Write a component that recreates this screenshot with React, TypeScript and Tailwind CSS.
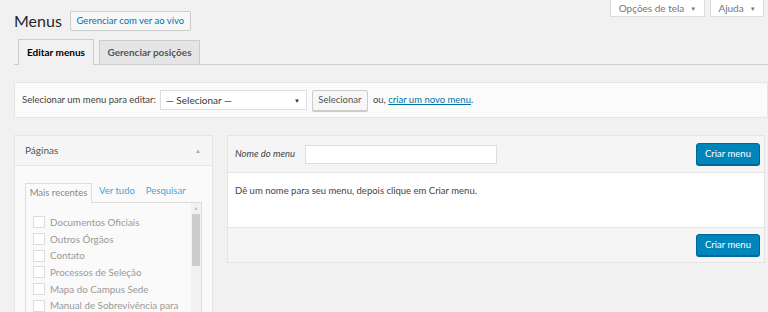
import React from "react";

const pages = [
  "Documentos Oficiais",
  "Outros Órgãos",
  "Contato",
  "Processos de Seleção",
  "Mapa do Campus Sede",
  "Manual de Sobrevivência para",
];

export default function App() {
  return (
    <div
      className="relative h-[312px] w-[768px] overflow-hidden whitespace-nowrap bg-[#f1f1f1] text-[9.5px] text-[#444]"
      style={{ fontFamily: 'Lato, "Noto Sans", sans-serif' }}
    >
      {/* screen meta links */}
      <div className="absolute right-[4px] top-0 flex gap-[5px]">
        <ScreenLink label="Opções de tela" w="w-[95px]" />
        <ScreenLink label="Ajuda" w="w-[54px]" />
      </div>

      <div className="pl-[14px]">
        <div className="mt-[10px] flex h-[22px] items-center">
          <h1 className="text-[16px] leading-[22px] font-normal text-[#23282d]">Menus</h1>
          <button className="ml-[8px] h-[20px] w-[121px] rounded-[2px] border border-[#ccc] bg-[#f7f7f7] text-[9.5px] leading-[18px] text-[#0073aa]">
            Gerenciar com ver ao vivo
          </button>
        </div>

        {/* tabs */}
        <div className="mt-[7px] flex h-[26px] items-end border-b border-[#ccc] pl-[4px]">
          <div className="-mb-px flex h-[26px] w-[76px] items-center justify-center border border-b-0 border-[#ccc] bg-[#f1f1f1] text-[10px] font-bold text-[#000]">
            Editar menus
          </div>
          <div className="-mb-px ml-[5px] flex h-[25px] w-[101px] items-center justify-center border border-[#ccc] bg-[#e5e5e5] text-[10px] font-bold text-[#555]">
            Gerenciar posições
          </div>
        </div>

        {/* select bar */}
        <div className="mt-[17px] flex h-[36px] items-center border border-[#e5e5e5] bg-[#fbfbfb] pl-[7px] text-[9.5px] text-[#444]">
          <span>Selecionar um menu para editar:</span>
          <div className="ml-[4px] flex h-[20px] w-[147px] items-center justify-between border border-[#ddd] bg-white pl-[5px] pr-[6px] text-[10px] text-[#32373c]">
            <span>— Selecionar —</span>
            <span className="text-[6px] text-[#333]">▼</span>
          </div>
          <button className="ml-[5px] h-[21px] w-[56px] rounded-[2px] border border-[#ccc] bg-[#f7f7f7] text-[9.5px] text-[#555] shadow-[0_1px_0_#ccc]">
            Selecionar
          </button>
          <span className="ml-[5px]">
            ou, <span className="text-[#0073aa] underline">criar um novo menu</span>.
          </span>
        </div>

        <div className="mt-[17px] flex gap-[14px]">
          {/* left panel */}
          <div className="h-[200px] w-[199px] shrink-0 border border-[#e5e5e5] bg-white">
            <div className="flex h-[30px] items-center justify-between border-b border-[#e5e5e5] bg-[#f5f5f5] pl-[10px] pr-[11px] text-[10px] text-[#555]">
              <span>Páginas</span>
              <span className="text-[6px] text-[#aaa]">▲</span>
            </div>
            <div className="bg-[#fafafa] px-[10px] pt-[17px]">
              <div className="flex h-[19px] items-end text-[9.5px]">
                <div className="-mb-px flex h-[20px] w-[67px] items-center justify-center border border-b-0 border-[#ddd] bg-[#fafafa] text-[#888]">
                  Mais recentes
                </div>
                <span className="mb-[4px] ml-[7px] text-[#46a5d6]">Ver tudo</span>
                <span className="mb-[4px] ml-[11px] text-[#46a5d6]">Pesquisar</span>
              </div>
              <div className="flex h-[120px] border border-[#ddd] bg-[#fafafa]">
                <div className="flex-1 pl-[7px] pt-[11px]">
                  {pages.map((p) => (
                    <div key={p} className="flex h-[16.7px] items-center text-[9.8px] text-[#999]">
                      <span className="mr-[5px] h-[12px] w-[12px] shrink-0 border border-[#ddd] bg-white" />
                      {p}
                    </div>
                  ))}
                </div>
                <div className="flex w-[10px] flex-col items-center bg-[#f1f1f1]">
                  <span className="text-[5px] leading-[11px] text-[#bbb]">▲</span>
                  <div className="h-[52px] w-[8px] bg-[#cdcdcd]" />
                </div>
              </div>
            </div>
          </div>

          {/* right panel */}
          <div className="mr-[3px] h-[128px] flex-1 border border-[#e5e5e5] bg-white">
            <div className="flex h-[37px] items-center border-b border-[#e5e5e5] bg-[#f5f5f5] pl-[7px] pr-[4px]">
              <span className="w-[63px] text-[9.5px] italic text-[#444]">Nome do menu</span>
              <div className="ml-[7px] h-[19px] w-[192px] border border-[#ddd] bg-white" />
              <CriarButton />
            </div>
            <div className="h-[54px] pl-[7px] pt-[11px] text-[9.5px] text-[#444]">
              Dê um nome para seu menu, depois clique em Criar menu.
            </div>
            <div className="flex h-[35px] items-center justify-end border-t border-[#e5e5e5] bg-[#f5f5f5] pr-[4px]">
              <CriarButton />
            </div>
          </div>
        </div>
      </div>
    </div>
  );
}

function CriarButton() {
  return (
    <button className="ml-auto h-[22px] w-[64px] rounded-[3px] border border-[#006799] bg-[#0085ba] text-[9.5px] text-white shadow-[0_1px_0_#006799]">
      Criar menu
    </button>
  );
}

function ScreenLink({ label, w }: { label: string; w: string }) {
  return (
    <div className={`flex h-[17px] items-center justify-center gap-[6px] border border-t-0 border-[#ddd] bg-white text-[10px] text-[#72777c] ${w}`}>
      <span>{label}</span>
      <span className="text-[6px]">▼</span>
    </div>
  );
}
